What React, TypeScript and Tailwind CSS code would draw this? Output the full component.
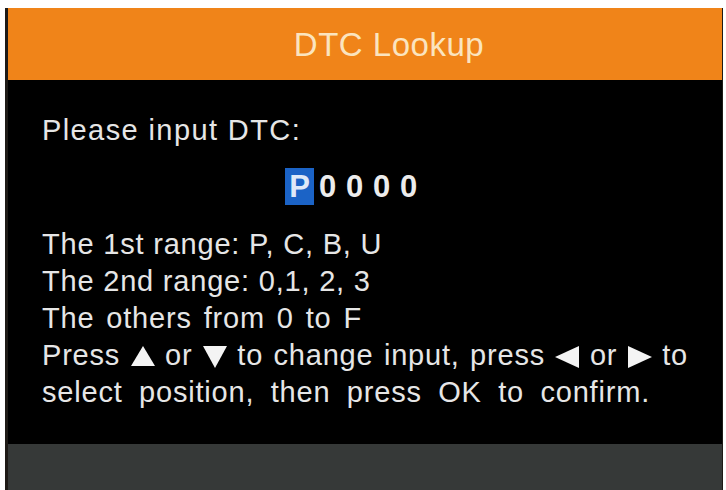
const Tri = ({ dir }: { dir: "up" | "down" | "left" | "right" }) => {
  const pts = {
    up: "12,0 24,20 0,20",
    down: "0,0 24,0 12,22",
    left: "24,0 24,22 0,11",
    right: "0,0 24,11 0,22",
  }[dir];
  return (
    <svg width="24" height="22" viewBox="0 0 24 22" className="inline-block align-[-3px]">
      <polygon points={pts} fill="#f4f4f4" />
    </svg>
  );
};

export default function App() {
  const font = { fontFamily: '"Liberation Sans", Arial, sans-serif' };
  return (
    <div className="w-[726px] h-[490px] bg-white pl-[5px] pt-[8px] pr-[3px]" style={font}>
      <div className="h-full flex flex-col border-l-[3px] border-r border-[#1e1a16]">
        <div className="h-[72px] bg-[#f08419] flex items-center justify-center pl-[48px]">
          <span className="text-[33px] tracking-[0.5px] text-[#fbe4bf] pt-[1px]">DTC Lookup</span>
        </div>

        <div className="flex-1 bg-black pl-[34px] pt-[32px] text-[29px] leading-[37px] tracking-[0.8px] text-[#e6e6e6]">
          <div className="tracking-[1.4px]">Please input DTC:</div>

          <div className="flex mt-[19px] ml-[243px] text-[31px] font-bold text-[#ececec] h-[37px] leading-[37px] tracking-normal">
            <div className="w-[29px] bg-[#1b63c6] text-center text-[#dfe9f8]">P</div>
            <div className="w-[27px] text-center">0</div>
            <div className="w-[27px] text-center">0</div>
            <div className="w-[27px] text-center">0</div>
            <div className="w-[27px] text-center">0</div>
          </div>

          <div className="mt-[21px]">The 1st range: P, C, B, U</div>
          <div>The 2nd range: 0,1, 2, 3</div>
          <div className="w-[320px] [text-align-last:justify]">The others from 0 to F</div>
          <div className="w-[646px] [text-align-last:justify]">
            Press <Tri dir="up" /> or <Tri dir="down" /> to change input, press <Tri dir="left" /> or{" "}
            <Tri dir="right" /> to
          </div>
          <div className="w-[608px] [text-align-last:justify]">select position, then press OK to confirm.</div>
        </div>

        <div className="h-[46px] bg-[#363938]" />
      </div>
    </div>
  );
}
